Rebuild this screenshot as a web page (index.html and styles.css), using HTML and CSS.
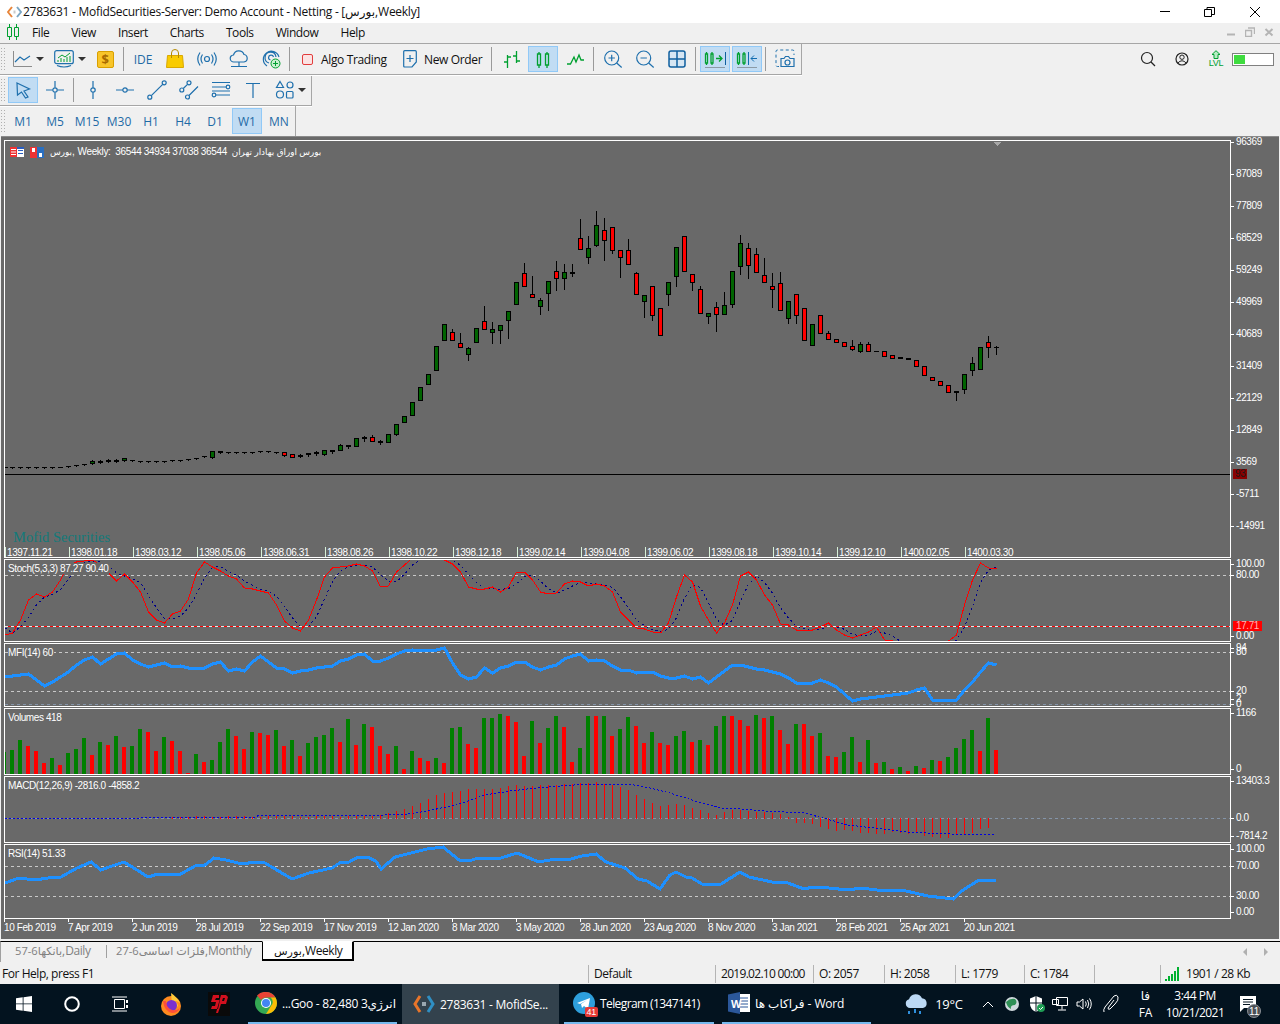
FILE: index.html
```html
<!DOCTYPE html>
<html lang="en">
  <head>
    <meta charset="UTF-8" />
    <title>2783631 - MofidSecurities-Server: Demo Account - Netting</title>
    <link rel="stylesheet" href="styles.css">
  </head>
  <body>
    <!-- Title bar -->
    <header class="titlebar">
      <svg class="app-icon" width="15" height="12" viewBox="0 0 15 12"><path d="M5 1L1 6l4 5" fill="none" stroke="#e8853a" stroke-width="2"/><path d="M10 1l4 5-4 5" fill="none" stroke="#7aa6c4" stroke-width="2"/><path d="M6.500 6h2" stroke="#c9c9c9" stroke-width="3"/></svg>
      <span class="title-text">2783631 - MofidSecurities-Server: Demo Account - Netting - [بورس,Weekly]</span>
      <div class="win-controls">
        <svg width="12" height="12" viewBox="0 0 12 12"><path d="M1 5.500h10" stroke="#000"/></svg>
        <svg width="12" height="12" viewBox="0 0 12 12"><path d="M.5 3.500h7v7h-7zM3 3V1.500h7.500V8.500H8" fill="none" stroke="#000"/></svg>
        <svg width="12" height="12" viewBox="0 0 12 12"><path d="M1 1l10 10M11 1L1 11" stroke="#000"/></svg>
      </div>
    </header>

    <!-- Menu -->
    <nav class="menubar">
      <svg class="menu-logo" width="14" height="16" viewBox="0 0 14 16"><path d="M3.500 0v3M3.500 13v3M10.500 0v3M10.500 13v3" stroke="#00a030"/><path d="M1.500 3.500h4v9h-4zM8.500 3.500h4v9h-4z" fill="none" stroke="#00a030"/></svg>
      <span>File</span><span>View</span><span>Insert</span><span>Charts</span><span>Tools</span><span>Window</span><span>Help</span>
      <div class="child-controls">
        <svg width="10" height="10" viewBox="0 0 10 10"><path d="M1 7.500h8" stroke="#b4b4b4" stroke-width="2"/></svg>
        <svg width="10" height="10" viewBox="0 0 10 10"><path d="M.500 3.500h6v6h-6zM3 1h6.500v6" fill="none" stroke="#b4b4b4" stroke-width="1.400"/></svg>
        <svg width="10" height="10" viewBox="0 0 10 10"><path d="M1.500 2l7 6.500M8.500 2l-7 6.500" stroke="#b4b4b4" stroke-width="2"/></svg>
      </div>
    </nav>

    <!-- Toolbars -->
    <div class="toolbar-row toolbar-top">
      <div class="toolbar">
        <span class="grip"></span>
        <button class="tool tool-drop">
          <svg width="19" height="16" viewBox="0 0 19 16"><path d="M.500 0v15.500H19" fill="none" stroke="#8c8c8c"/><path class="ic" d="M2 11l5-5 4 3 6-4"/></svg>
          <i class="caret"></i>
        </button>
        <button class="tool tool-drop">
          <svg width="20" height="20" viewBox="0 0 20 20"><rect class="ic" x=".7" y="1.700" width="18.600" height="13" rx="2"/><path class="ic" d="M3 16.500q7 3 14 0"/><path d="M4 9l4-3 3 2 5-4" fill="none" stroke="#00a030"/><path d="M4 13v-2M7 13V9M10 13v-3M13 13V8M16 13V7" stroke="#00a030"/></svg>
          <i class="caret"></i>
        </button>
        <button class="tool"><span class="dollar">$</span></button>
        <span class="sep"></span>
        <button class="tool tool-text">IDE</button>
        <button class="tool">
          <svg width="20" height="20" viewBox="0 0 20 20"><path d="M2.500 6.500h15l1 12h-17z" fill="#f9cb00" stroke="#d9a800"/><path d="M6.500 9V4a3.500 3.500 0 017 0v5" fill="none" stroke="#b58a00"/></svg>
        </button>
        <button class="tool">
          <svg width="20" height="20" viewBox="0 0 20 20"><circle class="ic" cx="10" cy="10" r="2.500"/><path class="ic" d="M5.500 5.500q-3 4.500 0 9M14.500 5.500q3 4.500 0 9M3 3.500q-4.500 6.500 0 13M17 3.500q4.500 6.500 0 13"/></svg>
        </button>
        <button class="tool">
          <svg width="20" height="20" viewBox="0 0 20 20"><path class="ic" d="M5 13a3.500 3.500 0 01-.5-7 5.500 5.500 0 0110.500-.5 3.800 3.800 0 010 7.500z"/><path class="ic" d="M10 13v4M2 17.500h16"/></svg>
        </button>
        <button class="tool">
          <svg width="20" height="20" viewBox="0 0 20 20"><path class="ic" d="M6 17A8 8 0 1118 8M8 14a5.500 5.500 0 117-6M9.500 11a2.500 2.500 0 113-3"/><circle cx="14.500" cy="14.500" r="4.500" fill="#c9f0d0" stroke="#00a030"/><path d="M12 14.500h5M14.500 12v5" stroke="#00a030"/></svg>
        </button>
        <span class="sep"></span>
        <button class="tool tool-wide tool-algo"><i class="algo-box"></i><span>Algo Trading</span></button>
        <button class="tool tool-wide tool-order">
          <svg width="14" height="18" viewBox="0 0 14 18"><path class="ic" d="M.7 1.700Q.7.700 1.700.700h10.600q1 0 1 1V12l-4.300 5H1.700q-1 0-1-1z"/><path class="ic" d="M7 5v7M3.500 8.500h7"/></svg>
          <span>New Order</span>
        </button>
        <span class="sep"></span>
        <button class="tool">
          <svg width="20" height="20" viewBox="0 0 20 20"><path class="ic-g" d="M6.500 6v13M3 13h3.500M6.500 8H10M15.500 2v12M12 7h3.500M15.500 12H19"/></svg>
        </button>
        <button class="tool active">
          <svg width="20" height="20" viewBox="0 0 20 20"><path class="ic-g" d="M4.500 5h3v11h-3zM6 3v2M6 16v3M12.500 5h3v11h-3zM14 3v2M14 16v3"/></svg>
        </button>
        <button class="tool">
          <svg width="20" height="20" viewBox="0 0 20 20"><path class="ic-g" d="M2 15h3.500L9 8l2 5 3-7 2 5h3"/></svg>
        </button>
        <span class="sep"></span>
        <button class="tool">
          <svg width="20" height="20" viewBox="0 0 20 20"><circle class="ic" cx="8.700" cy="9" r="7"/><path class="ic" d="M13.700 14l5 4.500M5.500 9h6.400M8.700 5.800v6.400"/></svg>
        </button>
        <button class="tool">
          <svg width="20" height="20" viewBox="0 0 20 20"><circle class="ic" cx="8.700" cy="9" r="7"/><path class="ic" d="M13.700 14l5 4.500M5.500 9h6.400"/></svg>
        </button>
        <button class="tool">
          <svg width="18" height="18" viewBox="0 0 18 18"><rect x="1" y="1" width="16" height="16" rx="2" fill="#d6e6f3" stroke="#0f5f9f" stroke-width="1.500"/><path d="M9 1v16M1 9h16" stroke="#0f5f9f" stroke-width="1.500"/></svg>
        </button>
        <span class="sep"></span>
        <button class="tool active">
          <svg width="24" height="20" viewBox="0 0 24 20"><path class="ic-g" d="M2.500 5h2v9h-2zM3.500 3v2M3.500 14v2M8 5h2v9H8zM9 3v2M9 14v2M13 9.500h6M16 6.500l3 3-3 3"/><path d="M22.500 3v13" stroke="#0f5f9f"/><path d="M2 18.500h20" stroke="#8c9aa5"/></svg>
        </button>
        <button class="tool active">
          <svg width="24" height="20" viewBox="0 0 24 20"><path class="ic-g" d="M2.500 5h2v9h-2zM3.500 3v2M3.500 14v2M8 5h2v9H8zM9 3v2M9 14v2"/><path d="M13.500 3v13M16 9.500h6M19 6.500l-3 3 3 3" fill="none" stroke="#0f6cb0"/><path d="M2 18.500h20" stroke="#8c9aa5"/></svg>
        </button>
        <span class="sep"></span>
        <button class="tool">
          <svg width="20" height="20" viewBox="0 0 20 20"><path d="M4 17.500H2.500Q1 17.500 1 16V2.500Q1 1 2.500 1h15Q19 1 19 2.500V6" fill="none" stroke="#1f70ad" stroke-dasharray="3 2.500"/><path class="ic" d="M6 9.500h3l1.500-2h3l1.500 2h4v8H6z"/><circle class="ic" cx="12.500" cy="13.500" r="2.500"/></svg>
        </button>
      </div>
      <div class="top-right">
        <svg width="16" height="16" viewBox="0 0 16 16"><circle cx="7" cy="7" r="5.500" fill="none" stroke="#222" stroke-width="1.200"/><path d="M11 11l4 4" stroke="#222" stroke-width="1.200"/></svg>
        <svg class="user-ic" width="14" height="14" viewBox="0 0 14 14"><circle cx="7" cy="7" r="6" fill="none" stroke="#222" stroke-width="1.200"/><circle cx="7" cy="5.200" r="2.200" fill="none" stroke="#222"/><path d="M2.800 11q4.200-4.500 8.400 0" fill="none" stroke="#222"/></svg>
        <span class="lvl">
          <svg width="10" height="9" viewBox="0 0 10 9"><path d="M5 .7L9 4.500H7v4H3v-4H1z" fill="#b8ecc4" stroke="#00a030"/></svg>
          <b>LVL</b>
        </span>
        <span class="level-bar"><i></i></span>
      </div>
    </div>

    <div class="toolbar toolbar-draw">
      <span class="grip"></span>
      <button class="tool active">
        <svg width="20" height="20" viewBox="0 0 20 20"><path class="ic" d="M4 3l12.500 6-5.500 2 4 6-2.500 1-4-6L4.500 15z"/></svg>
      </button>
      <button class="tool">
        <svg width="20" height="20" viewBox="0 0 20 20"><circle class="ic" cx="10" cy="10" r="2.200"/><path class="ic" d="M10 1v6.500M10 12.500V19M1 10h6.500M12.500 10H19"/></svg>
      </button>
      <span class="sep"></span>
      <button class="tool">
        <svg width="20" height="20" viewBox="0 0 20 20"><circle class="ic" cx="10" cy="10" r="2.200"/><path class="ic" d="M10 1v6.800M10 12.200V19"/></svg>
      </button>
      <button class="tool">
        <svg width="20" height="20" viewBox="0 0 20 20"><circle class="ic" cx="10" cy="10" r="2.200"/><path class="ic" d="M1 10h6.800M12.200 10H19"/></svg>
      </button>
      <button class="tool">
        <svg width="20" height="20" viewBox="0 0 20 20"><circle class="ic" cx="2.800" cy="17.200" r="2"/><circle class="ic" cx="17.200" cy="2.800" r="2"/><path class="ic" d="M4.300 15.700L15.700 4.300"/></svg>
      </button>
      <button class="tool">
        <svg width="20" height="20" viewBox="0 0 20 20"><circle class="ic" cx="2.800" cy="10" r="2"/><circle class="ic" cx="10" cy="2.800" r="2"/><circle class="ic" cx="8.500" cy="17" r="2"/><path class="ic" d="M4.300 8.500l4.200-4.200M10 15.500L19 6.500"/></svg>
      </button>
      <button class="tool">
        <svg width="20" height="20" viewBox="0 0 20 20"><circle class="ic" cx="17" cy="7" r="1.800"/><circle class="ic" cx="3" cy="15" r="1.800"/><path class="ic" d="M1 2.500h18M1 7h14M1 11h18M5 15h14"/></svg>
      </button>
      <button class="tool">
        <svg width="20" height="20" viewBox="0 0 20 20"><path class="ic" d="M3 3.500h14M10 3.500V18"/></svg>
      </button>
      <button class="tool tool-drop">
        <svg width="20" height="20" viewBox="0 0 20 20"><path class="ic" d="M5 1.500l3.500 6h-7z"/><circle class="ic" cx="15" cy="5" r="3"/><circle class="ic" cx="5" cy="14.500" r="3.500"/><rect class="ic" x="11.500" y="11.500" width="6.500" height="6.500" rx="1"/></svg>
        <i class="caret"></i>
      </button>
    </div>

    <div class="toolbar toolbar-periods">
      <span class="grip"></span>
      <button class="tool tool-text">M1</button>
      <button class="tool tool-text">M5</button>
      <button class="tool tool-text">M15</button>
      <button class="tool tool-text">M30</button>
      <button class="tool tool-text">H1</button>
      <button class="tool tool-text">H4</button>
      <button class="tool tool-text">D1</button>
      <button class="tool tool-text active">W1</button>
      <button class="tool tool-text">MN</button>
    </div>

    <!-- Chart window -->
    <main class="chart-window">
      <section class="pane pane-main">
        <div class="plot" id="plotMain">
          <div class="chart-info">
            <svg width="14" height="10" viewBox="0 0 14 10"><rect width="14" height="10" fill="#fff"/><path d="M0 0h7v10H0z" fill="#e33"/><path d="M1 2.500h5M1 5h5M1 7.500h5M8 2.500h5M8 5h5M8 7.500h5" stroke="#fff"/><path d="M7 0h7v2H7zM8 3h5v1H8zM8 6h5v1H8z" fill="#2a5fc0"/></svg>
            <svg width="14" height="11" viewBox="0 0 14 11"><path d="M0 0h7v11H0z" fill="#e33"/><path d="M7 0h7v11H7z" fill="#2a6fc0"/><path d="M2 1h3v4H2zM9 6h3v4H9z" fill="#fff"/></svg>
            <span><span class="fa">بورس</span>, Weekly:&nbsp; 36544 34934 37038 36544 &nbsp;<span class="fa">بورس اوراق بهادار تهران</span></span>
          </div>
          <div class="watermark">Mofid Securities</div>
        </div>
        <div class="axis" id="axisMain"></div>
      </section>
      <section class="pane pane-stoch">
        <div class="plot" id="plotStoch"><div class="pane-label">Stoch(5,3,3) 87.27 90.40</div></div>
        <div class="axis" id="axisStoch"></div>
      </section>
      <section class="pane pane-mfi">
        <div class="plot" id="plotMfi"><div class="pane-label">MFI(14) 60</div></div>
        <div class="axis" id="axisMfi"></div>
      </section>
      <section class="pane pane-volumes">
        <div class="plot" id="plotVolumes"><div class="pane-label">Volumes 418</div></div>
        <div class="axis" id="axisVolumes"></div>
      </section>
      <section class="pane pane-macd">
        <div class="plot" id="plotMacd"><div class="pane-label">MACD(12,26,9) -2816.0 -4858.2</div></div>
        <div class="axis" id="axisMacd"></div>
      </section>
      <section class="pane pane-rsi">
        <div class="plot" id="plotRsi"><div class="pane-label">RSI(14) 51.33</div></div>
        <div class="axis" id="axisRsi"></div>
      </section>
      <div class="time-axis" id="timeAxis"></div>
    </main>

    <!-- Chart tabs -->
    <div class="tabs">
      <span class="tab tab-daily"><span class="fa">بانکها6-57</span>,Daily</span>
      <span class="tab tab-monthly"><span class="fa">فلزات اساسی6-27</span>,Monthly</span>
      <span class="tab tab-active"><span class="fa">بورس</span>,Weekly</span>
      <div class="tab-arrows">
        <svg width="5" height="8" viewBox="0 0 5 8"><path d="M4 0v8L0 4z" fill="#b0b0b0"/></svg>
        <svg width="5" height="8" viewBox="0 0 5 8"><path d="M1 0v8l4-4z" fill="#b0b0b0"/></svg>
      </div>
    </div>

    <!-- Status bar -->
    <footer class="statusbar">
      <span class="cell cell-help">For Help, press F1</span>
      <span class="cell cell-profile">Default</span>
      <span class="cell cell-date">2019.02.10 00:00</span>
      <span class="cell cell-o">O: 2057</span>
      <span class="cell cell-h">H: 2058</span>
      <span class="cell cell-l">L: 1779</span>
      <span class="cell cell-c">C: 1784</span>
      <span class="cell cell-empty"></span>
      <span class="cell cell-net">
        <svg width="15" height="14" viewBox="0 0 15 14"><path d="M1 12v2M4 9v5M7 7v7M10 4v10M13 0v14" stroke="#00b030" stroke-width="2"/></svg>
        1901 / 28 Kb
      </span>
    </footer>

    <!-- Windows taskbar -->
    <div class="taskbar">
      <span class="tb-btn tb-start">
        <svg width="16" height="16" viewBox="0 0 16 16"><path d="M0 2.300L6.700 1.300V7.500H0zM7.500 1.200L16 0V7.500H7.500zM0 8.300H6.700V14.700L0 13.700zM7.500 8.300H16V16L7.500 14.800z" fill="#fff"/></svg>
      </span>
      <span class="tb-btn">
        <svg width="16" height="16" viewBox="0 0 16 16"><circle cx="8" cy="8" r="6.800" fill="none" stroke="#fff" stroke-width="2"/></svg>
      </span>
      <span class="tb-btn">
        <svg width="16" height="16" viewBox="0 0 16 16"><path d="M2.500 3.500h10v9h-10zM0 1h15M0 15h15" fill="none" stroke="#fff"/><path d="M14 4h2v3h-2zM14 9h2v3h-2z" fill="#fff"/></svg>
      </span>
      <span class="tb-btn tb-firefox">
        <svg width="22" height="24" viewBox="0 0 22 24"><circle cx="11" cy="14" r="10" fill="#ff8a1f"/><path d="M11 1q6 4 9 10-2-2-5-2 3 2 3 6-2-3-6-3z" fill="#ffc93a"/><circle cx="11.500" cy="13.500" r="5.500" fill="#7a2fd0"/><path d="M3 9q1 10 9 12 6 0 8-5-5 4-10 1-4-3-4-8z" fill="#ff4f3a"/></svg>
      </span>
      <span class="tb-btn tb-sapp">
        <svg width="22" height="24" viewBox="0 0 22 24"><rect width="22" height="24" fill="#0a0a0a"/><path d="M11 3H5L3 10h5l-1 4H4l-1 3h7l2-9H7l1-2h3zM13 3h5l2 2-2 7h-5l-3 9h-2l5-18zm2 3l-1 3h2l1-3z" fill="#d3101e"/></svg>
      </span>
      <span class="tb-item tb-chrome">
        <svg width="22" height="22" viewBox="0 0 22 22"><circle cx="11" cy="11" r="11" fill="#34a853"/><path d="M11 0a11 11 0 019.500 5.500H11A5.500 5.500 0 006 8L2 3.500A11 11 0 0111 0z" fill="#ea4335"/><path d="M20.500 5.500A11 11 0 0111 22l5-8a5.500 5.500 0 00-.500-8.500z" fill="#fbbc05"/><circle cx="11" cy="11" r="5" fill="#fff"/><circle cx="11" cy="11" r="4" fill="#4285f4"/></svg>
        <span>...Goo - 82,480 3انرژي</span>
      </span>
      <span class="tb-item tb-mt">
        <svg width="22" height="20" viewBox="0 0 22 20"><path d="M7 2L2 10l5 8" fill="none" stroke="#e8752a" stroke-width="3"/><path d="M15 2l5 8-5 8" fill="none" stroke="#2f8fc4" stroke-width="3"/><path d="M9 10h4" stroke="#9aa7b0" stroke-width="4"/></svg>
        <span>2783631 - MofidSe...</span>
      </span>
      <span class="tb-item tb-telegram">
        <span class="tg-icon">
          <svg width="22" height="22" viewBox="0 0 22 22"><circle cx="11" cy="11" r="11" fill="#2e9fdc"/><path d="M4 11l13-5-2 11-4-3-2 2-1-4 6-4-7 4z" fill="#fff"/></svg>
          <b class="tg-badge">41</b>
        </span>
        <span class="tg-text">Telegram (1347141)</span>
      </span>
      <span class="tb-item tb-word">
        <svg width="22" height="22" viewBox="0 0 22 22"><path d="M8 2h14v18H8z" fill="#fff"/><path d="M10 6h10M10 9h10M10 12h10M10 15h10" stroke="#2b579a"/><path d="M0 2.500L12 0v22L0 19.500z" fill="#2b579a"/></svg>
        <b class="word-w">W</b>
        <span>فراکاب ها - Word</span>
      </span>
      <div class="tray">
        <svg class="tray-cloud" width="24" height="22" viewBox="0 0 24 22"><path d="M6 15a4.500 4.500 0 01-1-8.800 7 7 0 0113-1 5 5 0 011 9.800z" fill="#bcd9f5"/><path d="M5 18v3M11 16v4M16 18v3" stroke="#2f8fdc" stroke-width="2"/></svg>
        <span class="tray-temp">19°C</span>
        <svg class="tray-chev" width="12" height="7" viewBox="0 0 12 7"><path d="M1 6l5-5 5 5" fill="none" stroke="#fff"/></svg>
        <svg class="tray-globe" width="14" height="14" viewBox="0 0 14 14"><circle cx="7" cy="7" r="7" fill="#cfd8dc"/><path d="M1 5q4-4 9-3 3 3 0 6-5 0-4 4-4-2-5-7z" fill="#2e8f55"/></svg>
        <svg class="tray-shield" width="16" height="16" viewBox="0 0 16 16"><path d="M7 0l6 2.500V8q0 5-6 8-6-3-6-8V2.500z" fill="#fff"/><path d="M7 0v16M1 7h12" stroke="#03131f"/><circle cx="12" cy="12" r="4" fill="#1f9d55"/><path d="M10 12l1.500 1.500L14 11" fill="none" stroke="#fff"/></svg>
        <svg class="tray-net" width="16" height="14" viewBox="0 0 16 14"><path d="M4.500.500h11v8h-11zM.500 2.500h6v5h-6zM10 8.500v4M6 13h8" fill="#03131f" stroke="#fff"/></svg>
        <svg class="tray-vol" width="16" height="14" viewBox="0 0 16 14"><path d="M1 5h2.500L7 2v10L3.500 9H1zM9.500 4.500q1.500 2.500 0 5M11.500 3q2.500 4 0 8M13.500 1.500q3.500 5.500 0 11" fill="none" stroke="#fff"/></svg>
        <svg class="tray-pen" width="18" height="20" viewBox="0 0 18 20"><path d="M2 18q-1-2 1-5L12 2q3-2 4 1t-3 7L8 15q-2 1-2-1l6-8" fill="none" stroke="#fff"/></svg>
        <span class="tray-lang"><span>فا</span><span>FA</span></span>
        <span class="tray-clock"><span>3:44 PM</span><span>10/21/2021</span></span>
        <span class="tray-note">
          <svg width="16" height="16" viewBox="0 0 16 16"><path d="M0 0h16v12H4l-4 4z" fill="#fff"/><path d="M3 3.500h10M3 6h10M3 8.500h7" stroke="#03131f"/></svg>
          <b class="note-badge">11</b>
        </span>
      </div>
    </div>

    <script src="chart.js"></script>
  </body>
</html>
```

FILE: styles.css
```css
* {
  box-sizing: border-box;
}
html,
body {
  margin: 0;
  padding: 0;
  overflow: hidden;
}
body {
  width: 1280px;
  height: 1024px;
  font-family: "Open Sans", "DejaVu Sans", sans-serif;
  font-size: 12px;
  letter-spacing: -0.27px;
  color: #111;
  background-color: #f0f0f0;
}
button {
  font: inherit;
  letter-spacing: inherit;
  border: none;
  background: none;
  padding: 0;
}
svg {
  display: block;
  flex: none;
}
.fa {
  font-size: 0.93em;
  letter-spacing: 0;
}

/* title + menu */
.titlebar {
  height: 23px;
  background: #fff;
  display: flex;
  align-items: center;
  padding-left: 7px;
}
.app-icon {
  margin-right: 1px;
}
.win-controls {
  margin-left: auto;
  display: flex;
  gap: 33px;
  padding-right: 19px;
}
.menubar {
  height: 20px;
  display: flex;
  align-items: center;
  gap: 22px;
  padding: 0 0 2px 6px;
  letter-spacing: -0.41px;
}
.menu-logo {
  margin-right: -10px;
}
.child-controls {
  margin-left: auto;
  display: flex;
  gap: 9px;
  padding-right: 6px;
}

/* toolbars */
.toolbar-row {
  display: flex;
  justify-content: space-between;
  border-top: 1px solid #a6a6a6;
}
.toolbar-top {
  height: 32px;
}
.toolbar {
  display: inline-flex;
  align-items: center;
  height: 31px;
  border-right: 1px solid #a6a6a6;
  border-bottom: 1px solid #a6a6a6;
  box-shadow: 0 1px 0 #fff;
}
.toolbar-draw,
.toolbar-periods {
  display: flex;
  width: fit-content;
}
.toolbar-periods {
  border-bottom: none;
  box-shadow: none;
  height: 30px;
}
.grip {
  width: 7px;
  height: 24px;
  background-image: radial-gradient(#b0b0b0 0.7px, transparent 0.8px);
  background-size: 3px 3px;
}
.tool {
  width: 30px;
  height: 26px;
  margin: 0 1px;
  display: flex;
  align-items: center;
  justify-content: center;
  border: 1px solid transparent;
  flex: none;
}
.tool.active {
  background-color: #c1dcf3;
  border-color: #91c9f7;
}
.tool-drop {
  width: 39px;
  justify-content: flex-start;
  padding-left: 4px;
  gap: 4px;
}
.toolbar-draw .tool-drop {
  width: 40px;
  gap: 3px;
}
.tool-text {
  color: #1f6aa5;
  letter-spacing: 0;
}
.tool-wide {
  width: auto;
  gap: 7px;
  color: #111;
  justify-content: flex-start;
  letter-spacing: -0.35px;
}
.tool-algo {
  width: 98px;
  padding-left: 8px;
  gap: 8px;
  margin: 0;
}
.tool-order {
  width: 98px;
  padding-left: 11px;
  margin: 0;
}
.algo-box {
  display: block;
  width: 11px;
  height: 11px;
  background: #fbe3e3;
  border: 1px solid #e23c3c;
  border-radius: 2px;
}
.caret {
  display: block;
  border-left: 4px solid transparent;
  border-right: 4px solid transparent;
  border-top: 4px solid #333;
}
.sep {
  width: 1px;
  height: 24px;
  background: #9a9a9a;
  margin: 0 3px 0 2px;
  flex: none;
}
.dollar {
  display: block;
  width: 17px;
  height: 17px;
  line-height: 15px;
  text-align: center;
  font-weight: bold;
  font-size: 13px;
  color: #a86a00;
  background: #f8c52a;
  border: 1px solid #d9a000;
  border-radius: 2px;
}
.ic {
  fill: none;
  stroke: #1f70ad;
  stroke-width: 1.2;
}
.ic-g {
  fill: none;
  stroke: #00a030;
  stroke-width: 1.3;
}
.top-right {
  display: flex;
  align-items: center;
  height: 30px;
  padding-right: 6px;
}
.user-ic {
  margin-left: 19px;
}
.lvl {
  margin-left: 19px;
  width: 16px;
  display: flex;
  flex-direction: column;
  align-items: center;
}
.lvl b {
  font: 9px/9px "Liberation Sans", sans-serif;
  color: #00a030;
}
.level-bar {
  display: block;
  margin-left: 8px;
  width: 42px;
  height: 13px;
  background: #fff;
  border: 1px solid #808080;
  padding: 1px;
}
.level-bar i {
  display: block;
  width: 11px;
  height: 100%;
  background: #3fdc3f;
}

/* chart window */
.chart-window {
  height: 803px;
  margin: 0 1px;
  padding-top: 3px;
  background: #696969;
  border-top: 1px solid #8a8a8a;
  font-family: "Liberation Sans", "DejaVu Sans", sans-serif;
  font-size: 10px;
  letter-spacing: -0.4px;
  color: #fff;
}
.pane {
  display: flex;
  margin-bottom: 1px;
}
.pane-main {
  height: 418px;
}
.pane-stoch {
  height: 83px;
}
.pane-mfi {
  height: 64px;
}
.pane-volumes {
  height: 67px;
}
.pane-macd {
  height: 67px;
}
.pane-rsi {
  height: 75px;
  margin-bottom: 0;
}
.plot {
  position: relative;
  margin-left: 3px;
  width: 1227px;
  flex: none;
  border: 1px solid #fff;
  overflow: hidden;
}
.plot > svg {
  position: absolute;
  left: 0;
  top: 0;
  shape-rendering: crispEdges;
}
.axis {
  position: relative;
  flex: 1;
}
.axis-label {
  position: absolute;
  left: 5px;
  line-height: 10px;
  white-space: nowrap;
}
.axis-label::before {
  content: "";
  position: absolute;
  left: -5px;
  top: 5px;
  width: 3px;
  height: 1px;
  background: #fff;
}
.axis-flag {
  left: 2px;
  padding: 0 3px;
  background: #f00;
  color: #ffb4b4;
}
.axis-flag::before,
.axis-price::before {
  display: none;
}
.axis-price {
  left: 2px;
  padding: 0 2px;
  background: #8b0000;
  color: #1a1a1a;
}
.chart-info {
  position: absolute;
  z-index: 2;
  left: 5px;
  top: 5px;
  display: flex;
  align-items: center;
  gap: 6px;
  line-height: 12px;
  letter-spacing: -0.35px;
}
.chart-info .fa {
  font-size: 0.88em;
}
.watermark {
  position: absolute;
  z-index: 2;
  left: 8px;
  bottom: 11px;
  font: 14.5px/18px "Liberation Serif", serif;
  letter-spacing: 0;
  color: #137a7a;
}
.date-label {
  position: absolute;
  z-index: 2;
  bottom: -1px;
  padding-left: 1px;
  line-height: 11px;
  border-left: 1px solid #d8f0d8;
  white-space: nowrap;
}
.pane-label {
  position: absolute;
  z-index: 2;
  left: 3px;
  top: 3px;
  background: #696969;
  line-height: 11px;
  padding-right: 1px;
}
.time-axis {
  position: relative;
  height: 19px;
}
.time-label {
  position: absolute;
  top: 3px;
  line-height: 11px;
  white-space: nowrap;
}
.time-label::before {
  content: "";
  position: absolute;
  left: 0;
  top: -3px;
  width: 1px;
  height: 3px;
  background: #fff;
}

/* tabs */
.tabs {
  position: relative;
  height: 21px;
  margin-top: 2px;
  border-top: 1px solid #000;
  padding-left: 2px;
  display: flex;
  border-left: 1px solid #a0a0a0;
  letter-spacing: -0.4px;
}
.tab {
  color: #808080;
  height: 19px;
  line-height: 18px;
  white-space: nowrap;
}
.tab-daily {
  width: 103px;
  padding-left: 12px;
}
.tab-monthly {
  width: 156px;
  padding-left: 9px;
  border-left: 1px solid #a0a0a0;
  height: 13px;
  margin-top: 3px;
  line-height: 12px;
}
.tab-active {
  width: 92px;
  margin-top: -1px;
  height: 20px;
  padding-left: 11px;
  color: #111;
  background: #fff;
  border: 1px solid #000;
  border-top-color: #fff;
  border-width: 1px 2px 2px 1px;
}
.tab-arrows {
  position: absolute;
  right: 12px;
  top: 6px;
  display: flex;
  gap: 15px;
}

/* status bar */
.statusbar {
  height: 22px;
  padding-top: 1px;
  display: flex;
  align-items: center;
}
.cell {
  height: 18px;
  line-height: 18px;
  padding-left: 5px;
  border-left: 1px solid #b4b4b4;
  white-space: nowrap;
  letter-spacing: -0.45px;
}
.cell-help {
  width: 588px;
  padding-left: 2px;
  border-left: none;
}
.cell-profile {
  width: 127px;
}
.cell-date {
  width: 98px;
  letter-spacing: -0.7px;
}
.cell-o,
.cell-h {
  width: 71px;
}
.cell-l {
  width: 69px;
}
.cell-c {
  width: 70px;
}
.cell-empty {
  width: 66px;
}
.cell-net {
  display: flex;
  align-items: center;
  gap: 6px;
  padding-left: 4px;
}

/* taskbar */
.taskbar {
  height: 40px;
  display: flex;
  align-items: center;
  background: #03131f;
  color: #fff;
  position: relative;
}
.tb-btn {
  width: 48px;
  height: 40px;
  display: flex;
  align-items: center;
  justify-content: center;
  flex: none;
}
.tb-firefox {
  margin-left: 3px;
}
.tb-sapp {
  margin-right: 5px;
}
.tb-item {
  position: relative;
  height: 40px;
  display: flex;
  align-items: center;
  gap: 5px;
  padding-left: 7px;
  white-space: nowrap;
  flex: none;
  border-bottom: 2px solid #76b9ed;
}
.tb-chrome {
  width: 149px;
  margin-right: 5px;
}
.tb-mt {
  width: 157px;
  padding-left: 11px;
  gap: 5px;
  margin-right: 5px;
  background: #33424d;
  border-bottom: none;
}
.tb-telegram {
  width: 150px;
  padding-left: 9px;
  margin-right: 8px;
}
.tg-text {
  letter-spacing: -0.6px;
}
.tb-word {
  width: 149px;
  padding-left: 6px;
}
.tg-icon {
  position: relative;
  display: block;
}
.tg-badge {
  position: absolute;
  right: -3px;
  bottom: -3px;
  padding: 0 2px;
  font: 9px/10px "Liberation Sans", sans-serif;
  color: #fff;
  background: #e53935;
  border-radius: 2px;
}
.word-w {
  position: absolute;
  left: 9px;
  top: 12px;
  font: bold 11px/16px "Liberation Sans", sans-serif;
  color: #fff;
}
.tray {
  margin-left: auto;
  display: flex;
  align-items: center;
  height: 40px;
}
.tray-temp {
  margin-left: 7px;
  font-size: 13px;
}
.tray-chev {
  margin-left: 19px;
}
.tray-globe {
  margin-left: 11px;
}
.tray-shield {
  margin-left: 10px;
}
.tray-net {
  margin-left: 7px;
}
.tray-vol {
  margin-left: 8px;
}
.tray-pen {
  margin-left: 10px;
}
.tray-lang,
.tray-clock {
  display: flex;
  flex-direction: column;
  align-items: center;
  line-height: 17px;
}
.tray-lang {
  margin-left: 19px;
}
.tray-clock {
  margin-left: 11px;
  margin-right: 5px;
  width: 64px;
  letter-spacing: -0.5px;
}
.tray-note {
  position: relative;
  width: 48px;
  padding-left: 8px;
}
.note-badge {
  position: absolute;
  left: 15px;
  top: 8px;
  width: 14px;
  height: 14px;
  font: 10px/13px "Liberation Sans", sans-serif;
  text-align: center;
  background: #4a4f55;
  border: 1px solid #8a8f95;
  border-radius: 50%;
}
```

FILE: chart.js
```js
// bars sit 8px apart in page coordinates, everything below is in page pixels
const barX = (k) => 12 + 8 * k;
const NS = "http://www.w3.org/2000/svg";

// [high, bodyTop, bodyBottom, low, g|r|d]
const candles = [
  [467, 467, 467, 468, "d"], [467, 467, 467, 468, "d"], [467, 467, 467, 468, "d"], [467, 467, 467, 468, "d"],
  [467, 467, 467, 468, "d"], [467, 467, 467, 468, "d"], [467, 467, 467, 467, "d"], [466, 466, 466, 467, "d"],
  [465, 465, 465, 466, "d"], [464, 464, 464, 465, "d"], [460, 461, 463, 464, "g"], [460, 461, 462, 463, "r"],
  [459, 460, 461, 462, "g"], [459, 460, 461, 462, "r"], [458, 458, 460, 461, "g"], [460, 460, 460, 461, "d"],
  [461, 461, 461, 462, "d"], [461, 461, 461, 462, "d"], [461, 461, 461, 462, "d"], [461, 461, 461, 462, "d"],
  [460, 460, 460, 461, "d"], [460, 460, 460, 461, "d"], [459, 459, 459, 460, "d"], [458, 458, 458, 459, "d"],
  [456, 456, 456, 457, "d"], [451, 451, 457, 458, "g"], [451, 451, 452, 453, "d"], [452, 452, 452, 453, "d"],
  [452, 452, 452, 453, "d"], [452, 452, 452, 453, "d"], [452, 452, 452, 453, "d"], [451, 451, 451, 452, "d"],
  [451, 451, 451, 452, "d"], [452, 452, 452, 453, "d"],
  [452, 452, 455, 456, "r"], [454, 454, 457, 457, "r"], [454, 455, 456, 457, "d"], [453, 453, 454, 456, "d"],
  [451, 452, 453, 455, "d"], [450, 450, 454, 455, "g"], [450, 450, 451, 453, "d"], [444, 445, 450, 450, "g"],
  [445, 445, 446, 448, "d"], [438, 438, 446, 446, "g"], [436, 437, 438, 441, "d"], [435, 437, 441, 441, "r"],
  [440, 441, 442, 444, "d"], [434, 434, 442, 442, "g"], [424, 424, 434, 435, "g"], [416, 416, 422, 422, "g"],
  [402, 402, 415, 415, "g"], [387, 387, 400, 400, "g"], [374, 374, 384, 384, "g"], [346, 346, 370, 370, "g"],
  [324, 324, 340, 340, "g"], [329, 332, 340, 340, "r"], [333, 343, 347, 347, "r"], [347, 348, 354, 360, "g"],
  [328, 328, 342, 342, "g"], [306, 321, 329, 329, "r"], [322, 329, 332, 343, "g"], [325, 325, 330, 343, "g"],
  [311, 311, 320, 338, "g"], [282, 282, 304, 304, "g"], [263, 273, 286, 286, "r"], [276, 294, 297, 297, "r"],
  [298, 300, 306, 314, "g"], [281, 281, 293, 310, "g"], [261, 271, 278, 290, "r"], [264, 272, 278, 289, "g"],
  [264, 272, 273, 276, "d"], [219, 238, 249, 249, "r"], [236, 248, 257, 263, "g"], [211, 225, 245, 246, "g"],
  [218, 230, 240, 260, "r"], [227, 227, 250, 253, "r"], [250, 250, 257, 277, "r"], [239, 250, 264, 264, "r"],
  [272, 273, 294, 294, "r"], [295, 295, 301, 317, "g"], [286, 286, 315, 320, "r"], [308, 308, 335, 335, "r"],
  [282, 282, 294, 305, "g"], [247, 247, 276, 286, "g"], [236, 236, 271, 271, "r"], [274, 274, 282, 290, "r"],
  [286, 289, 313, 313, "r"], [313, 313, 316, 323, "g"], [302, 307, 314, 331, "r"], [292, 305, 314, 314, "g"],
  [271, 271, 304, 307, "g"], [235, 243, 266, 274, "g"], [243, 248, 265, 278, "r"], [248, 254, 272, 272, "r"],
  [258, 275, 282, 282, "r"], [273, 286, 289, 307, "r"], [272, 283, 310, 310, "r"], [301, 301, 318, 323, "g"],
  [294, 294, 315, 323, "r"], [308, 308, 340, 340, "r"], [324, 324, 345, 345, "g"], [315, 315, 333, 333, "r"],
  [331, 333, 339, 339, "r"], [339, 339, 342, 342, "r"], [342, 342, 346, 346, "r"], [340, 346, 349, 350, "r"],
  [342, 344, 351, 352, "g"], [342, 344, 351, 351, "r"], [351, 351, 351, 351, "d"], [351, 351, 356, 356, "r"],
  [355, 355, 358, 358, "r"], [357, 357, 358, 358, "d"], [358, 358, 359, 359, "d"], [360, 360, 366, 366, "r"],
  [366, 366, 375, 375, "r"], [377, 377, 380, 380, "r"], [381, 381, 385, 385, "r"], [385, 385, 392, 392, "r"],
  [391, 391, 392, 400, "d"], [374, 374, 389, 393, "g"], [357, 363, 370, 375, "g"], [347, 347, 369, 369, "g"],
  [336, 342, 347, 357, "r"], [346, 347, 347, 354, "d"],
];

const stochMain = [
  633, 620, 600, 594, 597, 592, 580, 565, 562, 561, 560, 565, 573, 581, 574, 582, 592, 612, 620, 623,
  614, 611, 599, 573, 562, 567, 571, 576, 579, 588, 589, 591, 593, 605, 621, 628, 631, 620, 600, 577,
  568, 567, 566, 564, 566, 571, 587, 586, 572, 565, 558, 556, 556, 557, 560, 564, 572, 587, 589, 589,
  587, 592, 587, 572, 572, 580, 592, 594, 593, 584, 581, 582, 586, 584, 586, 592, 612, 620, 628, 629,
  632, 633, 623, 597, 575, 582, 606, 620, 633, 623, 605, 576, 572, 580, 595, 605, 624, 625, 630, 630,
  630, 627, 623, 630, 635, 638, 635, 632, 627, 640, 641, 643, 645, 647, 647, 647, 645, 641, 635, 605,
  580, 563, 568, 569,
];

const mfi = [
  676, 675, 674, 680, 686, 682, 677, 672, 665, 660, 657, 664, 659, 654, 653, 660, 664, 667, 665, 663,
  667, 666, 668, 668, 668, 664, 662, 671, 669, 671, 662, 656, 662, 668, 669, 673, 671, 670, 668, 667,
  666, 661, 659, 655, 654, 661, 661, 658, 654, 651, 650, 651, 650, 650, 648, 663, 675, 679, 677, 668,
  673, 668, 666, 662, 662, 667, 670, 667, 665, 659, 656, 654, 661, 660, 661, 666, 670, 670, 673, 672,
  672, 676, 678, 678, 676, 679, 677, 683, 677, 671, 665, 665, 667, 669, 670, 672, 674, 678, 683, 683,
  683, 680, 683, 687, 694, 701, 699, 698, 697, 696, 695, 694, 693, 690, 688, 700, 700, 700, 700, 690,
  682, 672, 663, 665,
];

// [top, g|r], bars run down to the pane floor
const volumes = [
  [750, "g"], [740, "g"], [746, "r"], [751, "r"], [763, "r"], [758, "g"], [765, "r"], [753, "g"], [749, "g"], [738, "g"],
  [755, "r"], [742, "g"], [745, "r"], [736, "g"], [747, "r"], [746, "g"], [729, "g"], [732, "r"], [751, "r"], [737, "g"],
  [741, "r"], [751, "r"], [773, "r"], [754, "g"], [762, "r"], [760, "g"], [742, "g"], [729, "g"], [736, "r"], [749, "r"],
  [732, "g"], [733, "r"], [735, "r"], [730, "g"], [746, "r"], [740, "g"], [756, "r"], [743, "g"], [737, "g"], [735, "g"],
  [728, "g"], [742, "r"], [719, "g"], [745, "r"], [724, "g"], [727, "r"], [746, "r"], [754, "r"], [746, "g"], [769, "r"],
  [751, "g"], [758, "r"], [761, "r"], [758, "g"], [763, "r"], [728, "g"], [727, "g"], [744, "r"], [748, "r"], [718, "g"],
  [718, "g"], [714, "g"], [716, "r"], [722, "r"], [756, "r"], [721, "g"], [743, "r"], [728, "g"], [716, "g"], [727, "r"],
  [762, "r"], [748, "g"], [716, "g"], [716, "r"], [716, "g"], [736, "r"], [729, "g"], [717, "g"], [726, "r"], [743, "r"],
  [732, "g"], [743, "r"], [745, "r"], [736, "g"], [731, "g"], [742, "r"], [740, "g"], [745, "r"], [726, "g"], [716, "g"],
  [716, "r"], [720, "r"], [726, "r"], [715, "g"], [718, "r"], [716, "g"], [730, "r"], [744, "r"], [724, "g"], [724, "r"],
  [736, "r"], [733, "g"], [756, "r"], [757, "r"], [752, "g"], [737, "g"], [762, "r"], [740, "g"], [763, "r"], [762, "g"],
  [769, "r"], [767, "g"], [771, "r"], [766, "g"], [768, "r"], [760, "g"], [761, "r"], [757, "g"], [748, "g"], [739, "g"],
  [730, "g"], [751, "r"], [718, "g"], [750, "r"],
];

// histogram end per bar, from k = 20 on (zero line is y 818)
const macdHist = [
  817, 817, 817, 816, 816, 817, 817, 816, 816, 816, 817, 817, 816, 816, 816, 816, 817, 817, 816, 816,
  816, 817, 816, 816, 816, 816, 815, 813, 811, 809, 806, 803, 799, 795, 793, 792, 791, 789, 789, 789,
  789, 788, 786, 785, 786, 786, 785, 785, 785, 784, 784, 783, 783, 782, 784, 785, 787, 790, 795, 799,
  803, 806, 805, 804, 805, 808, 810, 813, 815, 812, 810, 810, 811, 812, 812, 813, 814, 817, 822, 822,
  823, 826, 828, 830, 829, 830, 832, 832, 833, 833, 831, 832, 833, 831, 835, 836, 837, 837, 834, 833,
  832, 828, 827,
];

const macdSignal = [
  [5, 818], [140, 818], [150, 817], [255, 817], [260, 815], [383, 815], [408, 814], [427, 811], [446, 807], [465, 802],
  [485, 795], [510, 791], [536, 788], [574, 785], [606, 784], [628, 784], [650, 788], [670, 793], [695, 801], [720, 808],
  [740, 809], [765, 811], [804, 813], [823, 818], [848, 825], [874, 828], [906, 832], [950, 834], [996, 834],
];

const rsi = [
  [5, 883], [19, 878], [35, 880], [48, 878], [61, 877], [77, 868], [91, 862], [101, 870], [112, 866], [124, 862],
  [137, 870], [148, 877], [158, 874], [179, 875], [195, 866], [205, 865], [214, 858], [226, 860], [242, 864], [255, 862],
  [265, 863], [292, 879], [309, 873], [332, 868], [341, 862], [349, 862], [358, 857], [367, 857], [376, 861], [381, 869],
  [395, 857], [415, 852], [427, 849], [443, 847], [459, 860], [469, 861], [478, 858], [501, 858], [517, 853], [539, 862],
  [555, 859], [571, 859], [582, 856], [596, 854], [606, 862], [625, 868], [638, 879], [647, 881], [660, 889], [670, 875],
  [676, 872], [686, 877], [692, 878], [702, 884], [721, 884], [740, 872], [749, 877], [772, 882], [788, 883], [804, 889],
  [813, 887], [829, 888], [848, 890], [861, 888], [877, 890], [906, 891], [928, 896], [953, 899], [963, 890], [979, 880],
  [996, 880],
];

const jalaliDates = [
  "1397.11.21", "1398.01.18", "1398.03.12", "1398.05.06", "1398.06.31", "1398.08.26", "1398.10.22", "1398.12.18",
  "1399.02.14", "1399.04.08", "1399.06.02", "1399.08.18", "1399.10.14", "1399.12.10", "1400.02.05", "1400.03.30",
];
const timeLabels = [
  "10 Feb 2019", "7 Apr 2019", "2 Jun 2019", "28 Jul 2019", "22 Sep 2019", "17 Nov 2019", "12 Jan 2020", "8 Mar 2020",
  "3 May 2020", "28 Jun 2020", "23 Aug 2020", "8 Nov 2020", "3 Jan 2021", "28 Feb 2021", "25 Apr 2021", "20 Jun 2021",
];

// Helpers
function makeCanvas(plotId) {
  const plot = document.getElementById(plotId);
  const box = plot.getBoundingClientRect();
  const svg = document.createElementNS(NS, "svg");
  const w = box.width - 2;
  const h = box.height - 2;
  svg.setAttribute("width", w);
  svg.setAttribute("height", h);
  svg.setAttribute("viewBox", `${box.left + 1} ${box.top + 1} ${w} ${h}`);
  plot.prepend(svg);
  return svg;
}

function rect(svg, x, y, w, h, fill) {
  const el = document.createElementNS(NS, "rect");
  el.setAttribute("x", x);
  el.setAttribute("y", y);
  el.setAttribute("width", w);
  el.setAttribute("height", h);
  el.setAttribute("fill", fill);
  svg.appendChild(el);
}

function line(svg, points, stroke, width, dash) {
  const el = document.createElementNS(NS, "polyline");
  el.setAttribute("points", points.map((p) => p.join(",")).join(" "));
  el.setAttribute("fill", "none");
  el.setAttribute("stroke", stroke);
  el.setAttribute("stroke-width", width);
  if (dash) el.setAttribute("stroke-dasharray", dash);
  svg.appendChild(el);
}

function level(svg, y, stroke) {
  line(svg, [[5, y + 0.5], [1230, y + 0.5]], stroke || "#c8c8c8", 1, "3 3");
}

function axisLabels(axisId, paneTop, labels) {
  const axis = document.getElementById(axisId);
  labels.forEach(([text, y, cls]) => {
    const el = document.createElement("div");
    el.className = "axis-label" + (cls ? " " + cls : "");
    el.textContent = text;
    el.style.top = `${y - paneTop - 5}px`;
    axis.appendChild(el);
  });
}

const series = (ys) => ys.map((y, k) => [barX(k) + 0.5, y]);

// Main chart
(function drawMain() {
  const svg = makeCanvas("plotMain");
  rect(svg, 5, 467, 3, 1, "#000");
  candles.forEach(([high, top, bottom, low, kind], k) => {
    const x = barX(k);
    rect(svg, x, high, 1, low - high + 1, "#000");
    const h = bottom - top + 1;
    rect(svg, x - 2, top, 5, h, "#000");
    if (kind !== "d" && h > 2) {
      rect(svg, x - 1, top + 1, 3, h - 2, kind === "g" ? "#006400" : "#f00");
    }
  });
  rect(svg, 5, 474, 1225, 1, "#000");
  const marker = document.createElementNS(NS, "path");
  marker.setAttribute("d", "M993 142h9l-4.500 4z");
  marker.setAttribute("fill", "#a8a8a8");
  svg.appendChild(marker);

  const plot = document.getElementById("plotMain");
  jalaliDates.forEach((text, i) => {
    const el = document.createElement("div");
    el.className = "date-label";
    el.textContent = text;
    el.style.left = `${i * 64}px`;
    plot.appendChild(el);
  });

  const prices = [
    ["96369", 142], ["87089", 174], ["77809", 206], ["68529", 238], ["59249", 270], ["49969", 302], ["40689", 334],
    ["31409", 366], ["22129", 398], ["12849", 430], ["3569", 462], ["-5711", 494], ["-14991", 526], ["93", 474, "axis-price"],
  ];
  axisLabels("axisMain", 140, prices);
})();

// Stochastic
(function drawStoch() {
  const svg = makeCanvas("plotStoch");
  level(svg, 575);
  const signal = stochMain.map((y, k) => {
    const from = Math.max(0, k - 2);
    const part = stochMain.slice(from, k + 1);
    return part.reduce((a, b) => a + b, 0) / part.length;
  });
  line(svg, [[5, 628], ...series(signal)], "#00008b", 1, "2 3");
  line(svg, [[5, 635], ...series(stochMain)], "#f00", 1);
  rect(svg, 5, 626, 1225, 1, "#f00");
  level(svg, 626, "#e8e8e8");
  axisLabels("axisStoch", 559, [
    ["100.00", 564], ["80.00", 575], ["0.00", 636], ["17.71", 626, "axis-flag"],
  ]);
})();

// MFI
(function drawMfi() {
  const svg = makeCanvas("plotMfi");
  level(svg, 652);
  level(svg, 691);
  level(svg, 704, "#8494a8");
  line(svg, [[5, 676], ...series(mfi)], "#1e90ff", 3);
  axisLabels("axisMfi", 643, [["94", 648], ["80", 652], ["20", 691], ["2", 699], ["0", 704]]);
})();

// Volumes
(function drawVolumes() {
  const svg = makeCanvas("plotVolumes");
  rect(svg, 5, 752, 1, 22, "#008000");
  volumes.forEach(([top, kind], k) => {
    rect(svg, barX(k) - 2, top, 4, 774 - top, kind === "g" ? "#008000" : "#f00");
  });
  axisLabels("axisVolumes", 708, [["1166", 713], ["0", 769]]);
})();

// MACD
(function drawMacd() {
  const svg = makeCanvas("plotMacd");
  level(svg, 818, "#8494a8");
  macdHist.forEach((end, i) => {
    rect(svg, barX(i + 20), Math.min(end, 818), 1, Math.abs(end - 818) + 1, "#f00");
  });
  line(svg, macdSignal, "#0000e0", 1, "2 2");
  axisLabels("axisMacd", 776, [["13403.3", 781], ["0.0", 818], ["-7814.2", 836]]);
})();

// RSI
(function drawRsi() {
  const svg = makeCanvas("plotRsi");
  level(svg, 866);
  level(svg, 896);
  line(svg, rsi, "#1e90ff", 3);
  axisLabels("axisRsi", 844, [["100.00", 849], ["70.00", 866], ["30.00", 896], ["0.00", 912]]);
})();

// Time axis under the last pane
(function drawTimeAxis() {
  const axis = document.getElementById("timeAxis");
  timeLabels.forEach((text, i) => {
    const el = document.createElement("div");
    el.className = "time-label";
    el.textContent = text;
    el.style.left = `${3 + i * 64}px`;
    axis.appendChild(el);
  });
})();
```
